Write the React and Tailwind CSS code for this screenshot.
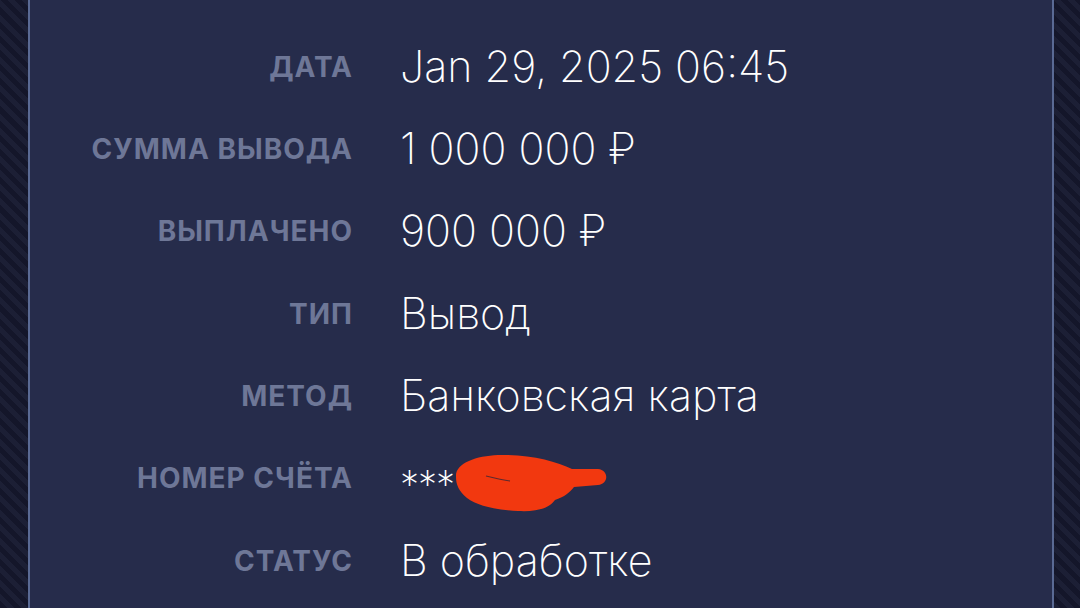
const rows = [
  { label: "Дата", value: "Jan 29, 2025 06:45" },
  { label: "Сумма вывода", value: "1 000 000 ₽" },
  { label: "Выплачено", value: "900 000 ₽" },
  { label: "Тип", value: "Вывод" },
  { label: "Метод", value: "Банковская карта" },
  { label: "Номер счёта", value: "***", hidden: true },
  { label: "Статус", value: "В обработке" },
];

function Scribble() {
  return (
    <svg width="160" height="60" viewBox="456 446 160 60" className="mt-[10px]">
      <path
        d="M458,470 C457,456 478,449 500,448 C530,447 558,454 574,462 L600,462 C611,463 611,477 600,478 L576,480 C571,486 566,490 557,493 C551,501 540,505 520,504 C499,503 479,499 469,491 C461,484 458,478 458,470 Z"
        fill="#f2380f"
      />
      <path d="M488,469 C496,471 504,473 512,474" stroke="#5a2a30" strokeWidth="1.2" fill="none" />
    </svg>
  );
}

export default function App() {
  return (
    <div className="w-[1080px] h-[608px] overflow-hidden flex pl-[28px] pr-[26px] bg-[repeating-linear-gradient(45deg,#14162a_0px,#14162a_5px,#1c1f35_5px,#1c1f35_10px)]">
      <div className="flex-1 border-x-2 border-[#5a6a94] bg-[#262c4b] pt-[25px]" style={{ fontFamily: "Inter, 'Noto Sans', sans-serif" }}>
        {rows.map((row) => (
          <div key={row.label} className="h-[82.33px] grid grid-cols-[322px_1fr] gap-x-[48px] items-center">
            <div className="text-right uppercase font-bold text-[28px] text-[#6e7797] tracking-[1px] mr-[-1px] mt-[1px]">
              {row.label}
            </div>
            <div className="flex items-center text-white font-extralight text-[43px] leading-none">
              {row.hidden ? (
                <>
                  <span className="text-[38px] mt-[12px] tracking-[-1px]">{row.value}</span>
                  <Scribble />
                </>
              ) : (
                row.value
              )}
            </div>
          </div>
        ))}
      </div>
    </div>
  );
}
